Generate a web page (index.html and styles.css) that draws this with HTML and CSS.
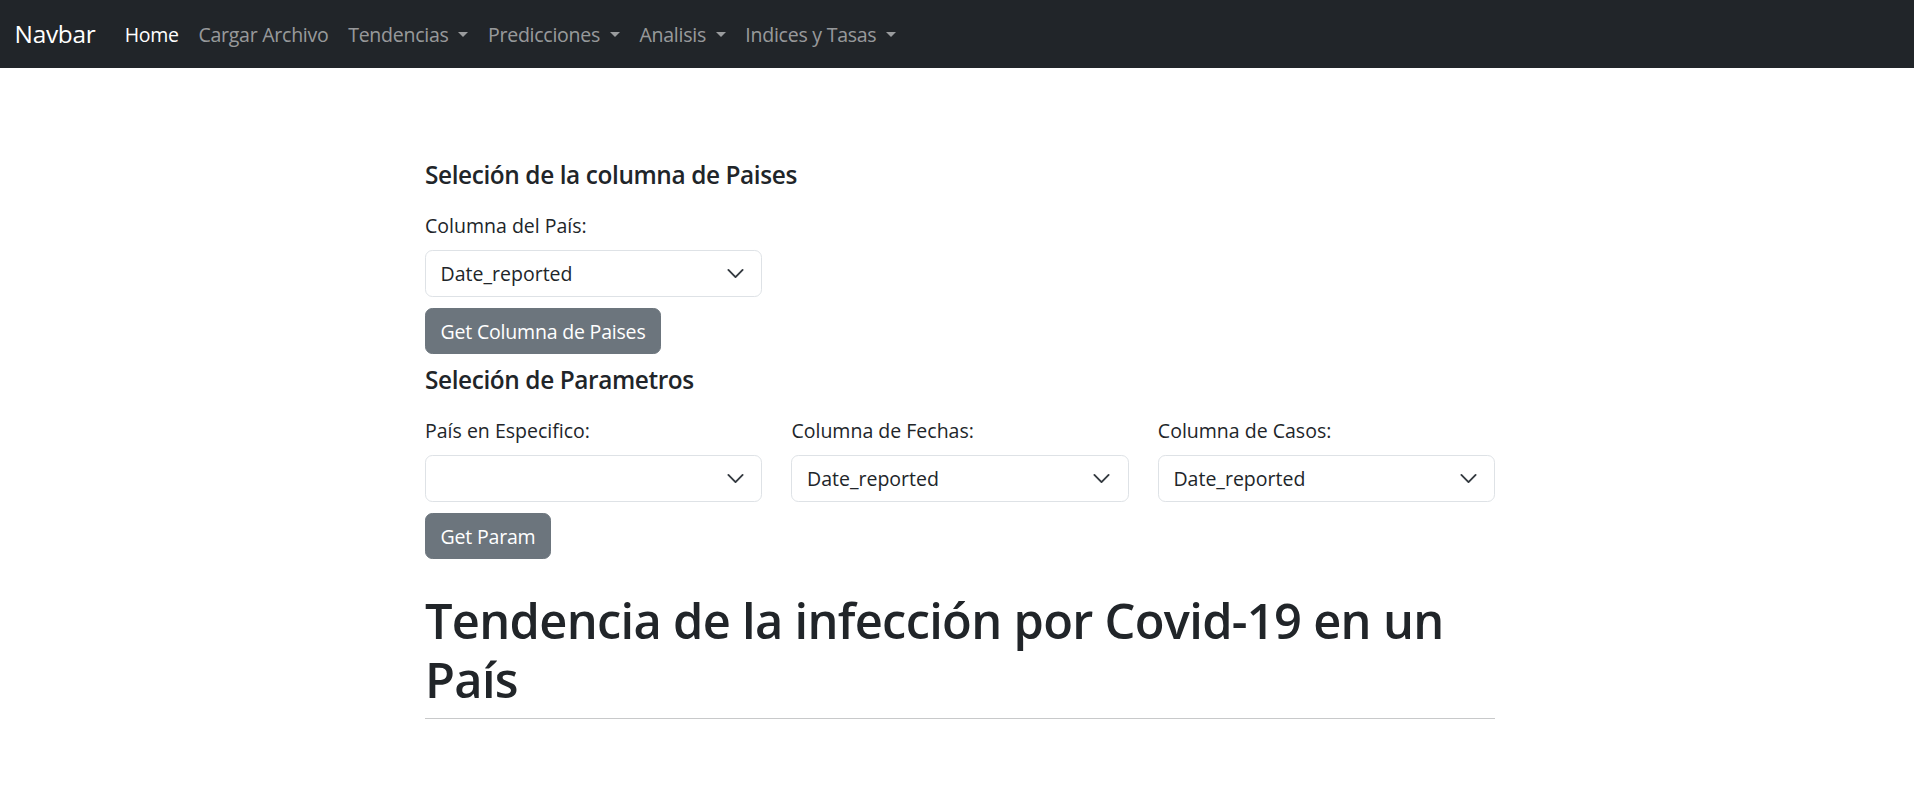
FILE: index.html
```html
<!DOCTYPE html>
<html lang="es">
<head>
<meta charset="utf-8">
<title>Tendencia Covid-19</title>
<link rel="stylesheet" href="styles.css">
</head>
<body>
<nav class="navbar">
  <a class="brand" href="#">Navbar</a>
  <ul class="nav">
    <li><a class="nav-link active" href="#">Home</a></li>
    <li><a class="nav-link" href="#">Cargar Archivo</a></li>
    <li><a class="nav-link toggle" href="#">Tendencias</a></li>
    <li><a class="nav-link toggle" href="#">Predicciones</a></li>
    <li><a class="nav-link toggle" href="#">Analisis</a></li>
    <li><a class="nav-link toggle" href="#">Indices y Tasas</a></li>
  </ul>
</nav>

<main class="page">
  <div class="container">
    <section class="block">
      <h5 class="section-title">Seleción de la columna de Paises</h5>
      <div class="grid">
        <div class="field">
          <label class="form-label">Columna del País:</label>
          <div class="select-wrap">
            <select class="form-select"><option>Date_reported</option></select>
            <svg class="chevron" viewBox="0 0 16 16"><path d="m2 5 6 6 6-6" fill="none" stroke="#343a40" stroke-linecap="round" stroke-linejoin="round" stroke-width="1.6"/></svg>
          </div>
        </div>
      </div>
      <button class="btn">Get Columna de Paises</button>
    </section>

    <section class="block">
      <h5 class="section-title">Seleción de Parametros</h5>
      <div class="grid">
        <div class="field">
          <label class="form-label">País en Especifico:</label>
          <div class="select-wrap">
            <select class="form-select"><option></option></select>
            <svg class="chevron" viewBox="0 0 16 16"><path d="m2 5 6 6 6-6" fill="none" stroke="#343a40" stroke-linecap="round" stroke-linejoin="round" stroke-width="1.6"/></svg>
          </div>
        </div>
        <div class="field">
          <label class="form-label">Columna de Fechas:</label>
          <div class="select-wrap">
            <select class="form-select"><option>Date_reported</option></select>
            <svg class="chevron" viewBox="0 0 16 16"><path d="m2 5 6 6 6-6" fill="none" stroke="#343a40" stroke-linecap="round" stroke-linejoin="round" stroke-width="1.6"/></svg>
          </div>
        </div>
        <div class="field">
          <label class="form-label">Columna de Casos:</label>
          <div class="select-wrap">
            <select class="form-select"><option>Date_reported</option></select>
            <svg class="chevron" viewBox="0 0 16 16"><path d="m2 5 6 6 6-6" fill="none" stroke="#343a40" stroke-linecap="round" stroke-linejoin="round" stroke-width="1.6"/></svg>
          </div>
        </div>
      </div>
      <button class="btn">Get Param</button>
    </section>

    <h1 class="title">Tendencia de la infección por Covid-19 en un País</h1>
    <hr class="divider">
  </div>
</main>
</body>
</html>
```
FILE: styles.css
```css
* { box-sizing: border-box; }

html, body {
  margin: 0;
  padding: 0;
  background: #fff;
}

body {
  font-family: "Open Sans", "Noto Sans", sans-serif;
  font-size: 19.53px;
  line-height: 1.5;
  color: #212529;
}

.navbar {
  display: flex;
  align-items: center;
  height: 68.4px;
  padding: 0 14.6px;
  background: #212529;
}

.brand {
  font-size: 24.4px;
  line-height: 1.5;
  color: #fff;
  text-decoration: none;
  margin-right: 19.5px;
  letter-spacing: -0.3px;
}

.nav {
  display: flex;
  list-style: none;
  margin: 0;
  padding: 0;
}

.nav-link {
  display: block;
  padding: 9.8px 9.8px;
  color: rgba(255, 255, 255, 0.55);
  text-decoration: none;
  letter-spacing: -0.25px;
}

.nav-link.active { color: #fff; }

.toggle::after {
  content: "";
  display: inline-block;
  margin-left: 0.5em;
  vertical-align: 0.255em;
  border-top: 0.3em solid;
  border-right: 0.3em solid transparent;
  border-left: 0.3em solid transparent;
  border-bottom: 0;
}

.page {
  padding-left: 6px;
}

.container {
  width: 1070px;
  margin: 0 auto;
  padding-top: 92px;
}

.section-title {
  font-size: 24.4px;
  font-weight: 600;
  line-height: 1.2;
  margin: 0 0 21.4px;
  letter-spacing: -0.4px;
}

.block + .block .section-title { margin-top: 11px; }

.grid {
  display: grid;
  grid-template-columns: repeat(3, 1fr);
  column-gap: 29.3px;
}

.form-label {
  display: block;
  margin-bottom: 10px;
}

.select-wrap {
  position: relative;
}

.form-select {
  display: block;
  width: 100%;
  height: 47px;
  padding: 7.3px 44px 7.3px 14.6px;
  font-family: inherit;
  font-size: 19.53px;
  line-height: 1.5;
  color: #212529;
  background: #fff;
  border: 1px solid #dee2e6;
  border-radius: 7.3px;
  appearance: none;
  -webkit-appearance: none;
}

.chevron {
  position: absolute;
  right: 17.2px;
  top: 50%;
  width: 19px;
  height: 19px;
  margin-top: -9.5px;
  pointer-events: none;
}

.btn {
  display: inline-block;
  margin-top: 10.6px;
  padding: 7.6px 14.6px;
  font-family: inherit;
  font-size: 19.53px;
  line-height: 1.5;
  color: #fff;
  background: #6c757d;
  border: 1px solid #6c757d;
  border-radius: 7.3px;
  letter-spacing: -0.2px;
}

.title {
  font-size: 48.8px;
  font-weight: 600;
  line-height: 1.2;
  margin: 31.5px 0 10px;
  letter-spacing: -0.7px;
}

.divider {
  margin: 0;
  border: 0;
  border-top: 1px solid #c8c9ca;
}
```
